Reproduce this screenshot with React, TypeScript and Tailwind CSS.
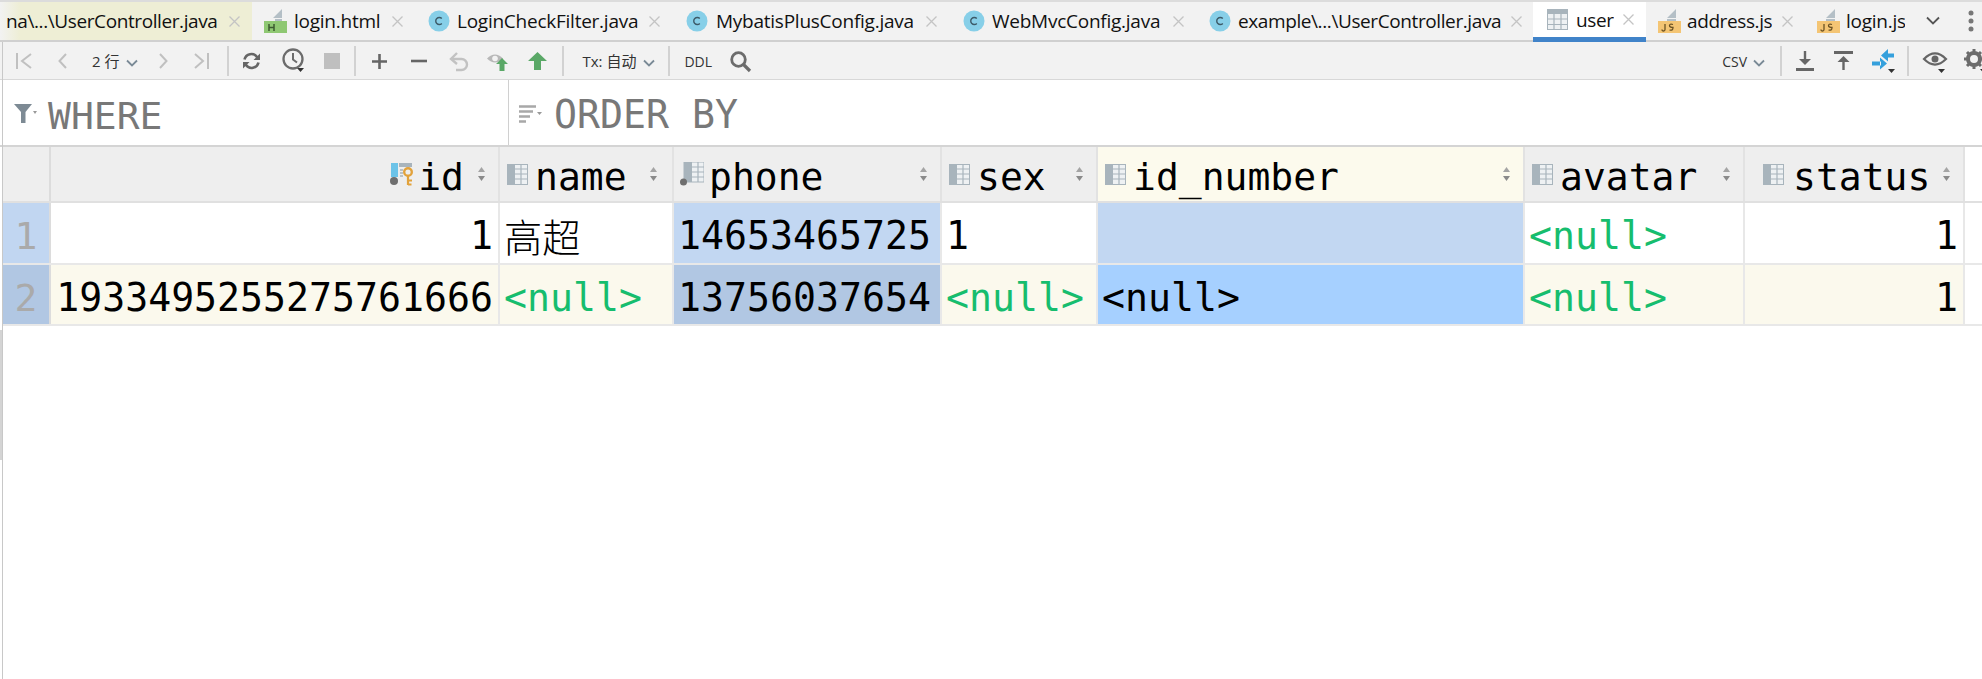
import React from "react";

const ui = { fontFamily: '"Open Sans","Noto Sans CJK SC",sans-serif' };
const mono = { fontFamily: '"DejaVu Sans Mono","Noto Sans CJK SC",monospace' };

const Close = () => (
  <svg width="13" height="13" viewBox="0 0 13 13" className="shrink-0">
    <path d="M1.5 1.5l10 10M11.5 1.5l-10 10" stroke="#c4c4c4" strokeWidth="1.3" fill="none" />
  </svg>
);
const CIcon = () => (
  <svg width="22" height="22" viewBox="0 0 22 22" className="shrink-0">
    <circle cx="11" cy="11" r="10.5" fill="#87cfe8" />
    <path d="M13.8 8.6a3.5 3.5 0 1 0 0 4.8" stroke="#3d5a68" strokeWidth="1.4" fill="none" />
  </svg>
);
const HtmlIcon = () => (
  <svg width="23" height="26" viewBox="0 0 23 26" className="shrink-0">
    <path d="M18 1v9h-9zM11 11h7v3h-7z" fill="#b4bfc6" />
    <rect x="0" y="13" width="23" height="12" fill="#8fc873" />
    <path d="M5 16v7M10 16v7M5 19.5h5" stroke="#3c5a30" strokeWidth="1.5" />
  </svg>
);
const JsIcon = () => (
  <svg width="23" height="26" viewBox="0 0 23 26" className="shrink-0">
    <path d="M18 1v9h-9zM9 11h9v3H9z" fill="#b4bfc6" />
    <rect x="0" y="13" width="23" height="12" fill="#f4c574" />
    <path d="M7 16v5.5q0 1.5-1.5 1.5T4 21.5M15 16.5q-3.5-1-3.5 1t3.5 2q0 3.500-3.500 2.500" stroke="#6b5223" strokeWidth="1.3" fill="none" />
  </svg>
);
const GridIcon = () => (
  <svg width="21" height="21" viewBox="0 0 21 21" className="shrink-0">
    <rect x="0.500" y="0.500" width="20" height="20" fill="#eef1f3" stroke="#a8b4bc" />
    <rect x="0" y="0" width="21" height="5" fill="#a8b4bc" />
    <path d="M7 5v16M14 5v16M0 10h21M0 15.500h21" stroke="#a8b4bc" strokeWidth="1.200" />
  </svg>
);

const tabs: { w: string; pl: string; text: string; icon: React.ReactNode; gap: string; cg: string; bg?: string; tw: string; tr: string }[] = [
  { w: "w-[252px]", pl: "pl-[6px]", text: "na\\...\\UserController.java", icon: null, gap: "gap-0", cg: "ml-[9px]", bg: "bg-[linear-gradient(90deg,#f2f2f2,#eeeed5_20px)]", tw: "w-[213px]", tr: "tracking-[-0.4px]" },
  { w: "w-[164px]", pl: "pl-[12px]", text: "login.html", icon: <HtmlIcon />, gap: "gap-[7px]", cg: "ml-[3px]", tw: "w-[87px]", tr: "tracking-[-0.25px]" },
  { w: "w-[258px]", pl: "pl-[12px]", text: "LoginCheckFilter.java", icon: <CIcon />, gap: "gap-[7px]", cg: "ml-[3px]", tw: "w-[181px]", tr: "tracking-[-0.25px]" },
  { w: "w-[277px]", pl: "pl-[12px]", text: "MybatisPlusConfig.java", icon: <CIcon />, gap: "gap-[8px]", cg: "ml-[3px]", tw: "w-[198px]", tr: "tracking-[-0.25px]" },
  { w: "w-[246px]", pl: "pl-[12px]", text: "WebMvcConfig.java", icon: <CIcon />, gap: "gap-[7px]", cg: "ml-[3px]", tw: "w-[170px]", tr: "tracking-[-0.25px]" },
  { w: "w-[336px]", pl: "pl-[12px]", text: "example\\...\\UserController.java", icon: <CIcon />, gap: "gap-[7px]", cg: "ml-[1px]", tw: "w-[264px]", tr: "tracking-[-0.4px]" },
];

const TabLabel = ({ text, cls }: { text: string; cls: string }) => (
  <span className={`${cls} shrink-0 overflow-hidden whitespace-nowrap text-[19px] leading-[26px] text-[#111]`} style={ui}>{text}</span>
);

const TabBar = () => (
  <div className="flex h-[42px] bg-[#f2f2f2] border-t-2 border-b-2 border-t-[#dcdcdc] border-b-[#d0d0d0] items-stretch">
    {tabs.map((t) => (
      <div key={t.text} className={`${t.w} ${t.pl} ${t.gap} ${t.bg ?? ""} shrink-0 flex items-center`}>
        {t.icon}
        <TabLabel text={t.text} cls={`${t.tw} ${t.tr}`} />
        <span className={t.cg}><Close /></span>
      </div>
    ))}
    <div className="w-[113px] shrink-0 bg-white border-b-[5px] border-[#4083c9] -mb-[2px] pl-[14px] flex items-center gap-[8px]">
      <GridIcon />
      <TabLabel text="user" cls="w-[38px] tracking-[-0.4px]" />
      <span className="ml-0"><Close /></span>
    </div>
    <div className="w-[159px] shrink-0 pl-[12px] flex items-center gap-[6px]">
      <JsIcon />
      <TabLabel text="address.js" cls="w-[85px] tracking-[-0.4px]" />
      <span className="ml-[3px]"><Close /></span>
    </div>
    <div className="flex-1 pl-[12px] flex items-center gap-[6px]">
      <JsIcon />
      <TabLabel text="login.js" cls="w-[59px] tracking-[-0.25px]" />
      <svg width="14" height="10" viewBox="0 0 14 10" className="ml-[15px] shrink-0"><path d="M1 1.500l6 6 6-6" stroke="#555" strokeWidth="1.800" fill="none" /></svg>
      <svg width="6" height="22" viewBox="0 0 6 22" className="ml-[22px] shrink-0"><circle cx="3" cy="3" r="2.500" fill="#777" /><circle cx="3" cy="11" r="2.500" fill="#777" /><circle cx="3" cy="19" r="2.500" fill="#777" /></svg>
    </div>
  </div>
);

const Sep = ({ ml }: { ml: string }) => <div className={`${ml} w-[2px] h-[30px] bg-[#d2d2d2] shrink-0`} />;
const Chev = ({ ml }: { ml: string }) => (
  <svg width="12" height="8" viewBox="0 0 12 8" className={`${ml} shrink-0 mt-[3px]`}><path d="M1 1.500l5 5 5-5" stroke="#7a8a96" strokeWidth="1.800" fill="none" /></svg>
);
const Caret = () => <path d="M0 0h7l-3.500 4z" fill="#333" />;

const I = ({ w, h, ml, children }: { w: number; h: number; ml: string; children: React.ReactNode }) => (
  <svg width={w} height={h} viewBox={`0 0 ${w} ${h}`} className={`${ml} shrink-0 overflow-visible`} fill="none">{children}</svg>
);

const Toolbar = () => (
  <div className="flex h-[38px] items-center bg-[#f2f2f2] border-b border-[#d8d8d8] pl-[3px] pt-[1px] overflow-hidden">
    <I w={16} h={18} ml="ml-[13px]"><path d="M1 1v16" stroke="#c0c0c0" strokeWidth="2" /><path d="M15 2L6 9l9 7" stroke="#c0c0c0" strokeWidth="2" /></I>
    <I w={9} h={18} ml="ml-[26px]"><path d="M8 2L1.500 9 8 16" stroke="#c0c0c0" strokeWidth="2" /></I>
    <span className="ml-[25px] text-[15px] text-[#333] whitespace-nowrap" style={ui}>2 行</span>
    <Chev ml="ml-[7px]" />
    <I w={9} h={18} ml="ml-[21px]"><path d="M1 2l6.500 7L1 16" stroke="#c0c0c0" strokeWidth="2" /></I>
    <I w={15} h={18} ml="ml-[26px]"><path d="M14 1v16" stroke="#c0c0c0" strokeWidth="2" /><path d="M1 2l8 7-8 7" stroke="#c0c0c0" strokeWidth="2" /></I>
    <Sep ml="ml-[18px]" />
    <I w={19} h={18} ml="ml-[13px]">
      <path d="M2.500 7.500A7 7 0 0 1 15 5l2 2M16.500 10.500A7 7 0 0 1 4 13l-2-2" stroke="#666" strokeWidth="2.600" />
      <path d="M18 1.500V8h-6.500zM1 16.500V10h6.500z" fill="#666" />
    </I>
    <I w={24} h={26} ml="ml-[21px]">
      <circle cx="11" cy="11" r="9.500" stroke="#6c6c6c" strokeWidth="2.300" />
      <path d="M11 5v6.500l4 3" stroke="#6c6c6c" strokeWidth="2" />
      <g transform="translate(15 20)"><Caret /></g>
    </I>
    <div className="ml-[18px] w-[16px] h-[16px] bg-[#bfbfbf] shrink-0" />
    <Sep ml="ml-[14px]" />
    <I w={17} h={17} ml="ml-[15px]"><path d="M8.500 1v15M1 8.500h15" stroke="#666" strokeWidth="2.600" /></I>
    <I w={16} h={4} ml="ml-[23px]"><path d="M0 2h16" stroke="#666" strokeWidth="2.600" /></I>
    <I w={19} h={19} ml="ml-[23px]">
      <path d="M2 7h9.500a5.500 5.500 0 0 1 0 11H6" stroke="#c2c2c2" strokeWidth="2.400" />
      <path d="M7 1L1 7l6 5" stroke="#c2c2c2" strokeWidth="2.400" />
    </I>
    <I w={23} h={22} ml="ml-[17px]">
      <path d="M1 8.500q8-8 16 0-8 8-16 0z" fill="#b8b8b8" />
      <circle cx="9" cy="8.500" r="2.800" fill="#f2f2f2" />
      <path d="M16 8l6 6h-3.500v7h-5v-7H10z" fill="#5aa867" />
    </I>
    <I w={19} h={18} ml="ml-[19px]"><path d="M9.500 0L19 9h-6v9H6V9H0z" fill="#5aa867" /></I>
    <Sep ml="ml-[15px]" />
    <span className="ml-[18px] text-[15px] text-[#333] whitespace-nowrap" style={ui}>Tx: 自动</span>
    <Chev ml="ml-[7px]" />
    <Sep ml="ml-[13px]" />
    <span className="ml-[14px] text-[14px] text-[#333] whitespace-nowrap" style={ui}>DDL</span>
    <I w={21} h={21} ml="ml-[18px]"><circle cx="8.500" cy="8.500" r="6.800" stroke="#6c6c6c" strokeWidth="2.800" /><path d="M13.500 13.500L20 20" stroke="#6c6c6c" strokeWidth="3.200" /></I>
    <div className="flex-1" />
    <span className="text-[14px] text-[#333] whitespace-nowrap" style={ui}>CSV</span>
    <Chev ml="ml-[6px]" />
    <Sep ml="ml-[15px]" />
    <I w={18} h={20} ml="ml-[14px]"><path d="M9 0v10" stroke="#666" strokeWidth="2.400" /><path d="M3 8h12l-6 6z" fill="#666" /><path d="M0 18.500h18" stroke="#666" strokeWidth="3" /></I>
    <I w={19} h={20} ml="ml-[20px]"><path d="M0 1.500h19" stroke="#666" strokeWidth="3" /><path d="M9.500 19V9" stroke="#666" strokeWidth="2.400" /><path d="M3.500 11h12l-6-6z" fill="#666" /></I>
    <I w={22} h={24} ml="ml-[19px]">
      <path d="M9 6.500L16 0v12.500zM15 4.500h7v4h-7z" fill="#35a0dc" />
      <path d="M8 8.500v12l7-6zM0 12.500h9v4H0z" fill="#35a0dc" />
      <g transform="translate(16 20)"><Caret /></g>
    </I>
    <Sep ml="ml-[13px]" />
    <I w={24} h={24} ml="ml-[14px]">
      <path d="M1 9q11-11 22 0-11 11-22 0z" stroke="#666" strokeWidth="2.200" transform="translate(0 1)" />
      <circle cx="12" cy="10" r="3.500" fill="#666" />
      <g transform="translate(15 20)"><Caret /></g>
    </I>
    <I w={22} h={24} ml="ml-[17px] -mr-[4px]">
      <circle cx="10" cy="10" r="6" stroke="#6c6c6c" strokeWidth="4" />
      <path d="M10 0v4M10 16v4M0 10h4M16 10h4M3 3l3 3M14 14l3 3M17 3l-3 3M6 14l-3 3" stroke="#6c6c6c" strokeWidth="3" />
      <g transform="translate(16 20)"><Caret /></g>
    </I>
  </div>
);

const FilterBar = () => (
  <div className="flex h-[67px] bg-white border-b-2 border-[#d4d4d4] pl-[3px]">
    <div className="w-[506px] shrink-0 flex items-center border-r border-[#d0d0d0] pl-[11px]">
      <svg width="23" height="20" viewBox="0 0 23 20" className="shrink-0 mt-[3px]">
        <path d="M0 0h18l-6.500 8v11H7V8z" fill="#7d8a94" />
        <path d="M19 7h4l-2 3z" fill="#999" />
      </svg>
      <span className="ml-[11px] text-[38px] text-[#787878] pt-[7px]" style={mono}>WHERE</span>
    </div>
    <div className="flex-1 flex items-center pl-[10px]">
      <svg width="23" height="18" viewBox="0 0 23 18" className="shrink-0 mt-[3px]">
        <path d="M0 1.500h17M0 6.500h14M0 11.500h11M0 16.500h7" stroke="#a8a8a8" strokeWidth="2.400" />
        <path d="M18 7h5l-2.500 3z" fill="#999" />
      </svg>
      <span className="ml-[12px] text-[38.2px] text-[#787878] whitespace-pre pt-[7px]" style={mono}>ORDER BY</span>
    </div>
  </div>
);

const Sort = () => (
  <svg width="9" height="14" viewBox="0 0 9 14" className="shrink-0">
    <path d="M4.500 0L8 5H1z" fill="#a4a4a4" />
    <path d="M4.500 14L8 9H1z" fill="#8a8a8a" />
  </svg>
);
const KeyIcon = () => (
  <svg width="24" height="23" viewBox="0 0 24 23" className="shrink-0">
    <rect x="1" y="0" width="7" height="14" fill="#6cc3e8" />
    <path d="M9 0h13v4H9z" fill="#a8b4bc" />
    <path d="M10 7h3M10 10h3M10 13h3" stroke="#a8b4bc" strokeWidth="1.500" />
    <circle cx="4" cy="18" r="4" fill="#6e6e6e" />
    <circle cx="18" cy="9" r="3.800" fill="none" stroke="#e2a23b" strokeWidth="2.400" />
    <path d="M18 13v9M18 17.500h4M18 21.500h3.500" stroke="#e2a23b" strokeWidth="2.200" />
  </svg>
);
const FkIcon = () => (
  <svg width="24" height="24" viewBox="0 0 24 24" className="shrink-0">
    <rect x="4" y="0" width="20" height="20" fill="#eef1f3" stroke="#a8b4bc" />
    <rect x="4" y="0" width="8" height="20" fill="#a8b4bc" />
    <path d="M12 5h12M12 10h12M12 15h12M18 0v20" stroke="#a8b4bc" strokeWidth="1.200" />
    <circle cx="3.500" cy="20" r="3.500" fill="#6e6e6e" />
  </svg>
);
const ColIcon = () => (
  <svg width="21" height="21" viewBox="0 0 21 21" className="shrink-0">
    <rect x="0.500" y="0.500" width="20" height="20" fill="#eef1f3" stroke="#a8b4bc" />
    <rect x="0" y="0" width="8" height="21" fill="#a8b4bc" />
    <path d="M8 5h13M8 10h13M8 15h13M14 0v21" stroke="#a8b4bc" strokeWidth="1.200" />
  </svg>
);

const cols = [
  { name: "id", w: "w-[449px]", icon: <KeyIcon />, justify: "justify-end pr-[12px]", gap: "gap-[4px]", sortMl: "ml-[9px]" },
  { name: "name", w: "w-[174px]", icon: <ColIcon />, justify: "pl-[7px]", gap: "gap-[7px]", sortMl: "ml-auto mr-[14px]" },
  { name: "phone", w: "w-[268px]", icon: <FkIcon />, justify: "pl-[6px]", gap: "gap-[5px]", sortMl: "ml-auto mr-[12px]" },
  { name: "sex", w: "w-[156px]", icon: <ColIcon />, justify: "pl-[7px]", gap: "gap-[7px]", sortMl: "ml-auto mr-[12px]" },
  { name: "id_number", w: "w-[427px]", icon: <ColIcon />, justify: "pl-[7px] bg-[#fcfaed]", gap: "gap-[7px]", sortMl: "ml-auto mr-[12px]" },
  { name: "avatar", w: "w-[220px]", icon: <ColIcon />, justify: "pl-[7px]", gap: "gap-[7px]", sortMl: "ml-auto mr-[12px]" },
  { name: "status", w: "w-[220px]", icon: <ColIcon />, justify: "pl-[18px]", gap: "gap-[9px]", sortMl: "ml-auto mr-[12px]" },
];

const Null = ({ black }: { black?: boolean }) => (
  <span className={black ? "text-black" : "text-[#16bd6e]"}>&lt;null&gt;</span>
);

type Cell = { v: React.ReactNode; right?: boolean; bg: string };
const rows: { n: string; hd: string; h: string; cells: Cell[] }[] = [
  {
    n: "1",
    hd: "bg-[#c1d6f1]",
    h: "h-[62px]",
    cells: [
      { v: "1", right: true, bg: "bg-white" },
      { v: <span style={{ fontFamily: '"Noto Sans CJK SC",sans-serif', fontWeight: 300 }}>高超</span>, bg: "bg-white" },
      { v: "14653465725", bg: "bg-[#c2d7f2]" },
      { v: "1", bg: "bg-white" },
      { v: "", bg: "bg-[#c2d7f2]" },
      { v: <Null />, bg: "bg-white" },
      { v: "1", right: true, bg: "bg-white" },
    ],
  },
  {
    n: "2",
    hd: "bg-[#b1c7e3]",
    h: "h-[61px]",
    cells: [
      { v: "1933495255275761666", right: true, bg: "bg-[#fbf9ed]" },
      { v: <Null />, bg: "bg-[#fbf9ed]" },
      { v: "13756037654", bg: "bg-[#b1c7e3]" },
      { v: <Null />, bg: "bg-[#fbf9ed]" },
      { v: <Null black />, bg: "bg-[#a6d0ff]" },
      { v: <Null />, bg: "bg-[#fbf9ed]" },
      { v: "1", right: true, bg: "bg-[#fbf9ed]" },
    ],
  },
];

const DataTable = () => (
  <div className="pl-[3px]" style={mono}>
    <div className="flex h-[56px] border-b-2 border-[#e0e0e0]">
      <div className="w-[48px] shrink-0 bg-[#eeeeee] border-r-2 border-[#dcdcdc]" />
      {cols.map((c) => (
        <div key={c.name} className={`${c.w} ${c.justify} ${c.gap} bg-[#eeeeee] shrink-0 flex items-center border-r-2 border-[#e2e2e2] text-[38px] text-black`}>
          {c.icon}
          <span className="leading-[48px] pt-[6px]">{c.name}</span>
          <span className={c.sortMl}><Sort /></span>
        </div>
      ))}
    </div>
    {rows.map((r) => (
      <div key={r.n} className={`flex ${r.h} border-b-2 border-[#e8e8e8]`}>
        <div className={`w-[48px] shrink-0 ${r.hd} border-r-2 border-[#dcdcdc] text-[38px] text-[#aaaaaa] text-center leading-[66px] overflow-hidden`}>{r.n}</div>
        {r.cells.map((c, i) => (
          <div key={i} className={`${cols[i].w} ${c.bg} shrink-0 border-r-2 border-[#e8e8e8] text-[38.2px] text-black leading-[66px] whitespace-nowrap overflow-hidden ${c.right ? "text-right pr-[5px]" : "pl-[4px]"}`}>{c.v}</div>
        ))}
      </div>
    ))}
  </div>
);

export default function App() {
  return (
    <div className="relative w-[1982px] h-[679px] bg-white overflow-hidden">
      <TabBar />
      <Toolbar />
      <FilterBar />
      <DataTable />
      <div className="absolute left-0 top-[42px] bottom-0 w-[3px] border-r border-[#c8c8c8]" />
      <div className="absolute left-0 top-[330px] h-[130px] w-[2px] bg-[#d4d4d4]" />
    </div>
  );
}
